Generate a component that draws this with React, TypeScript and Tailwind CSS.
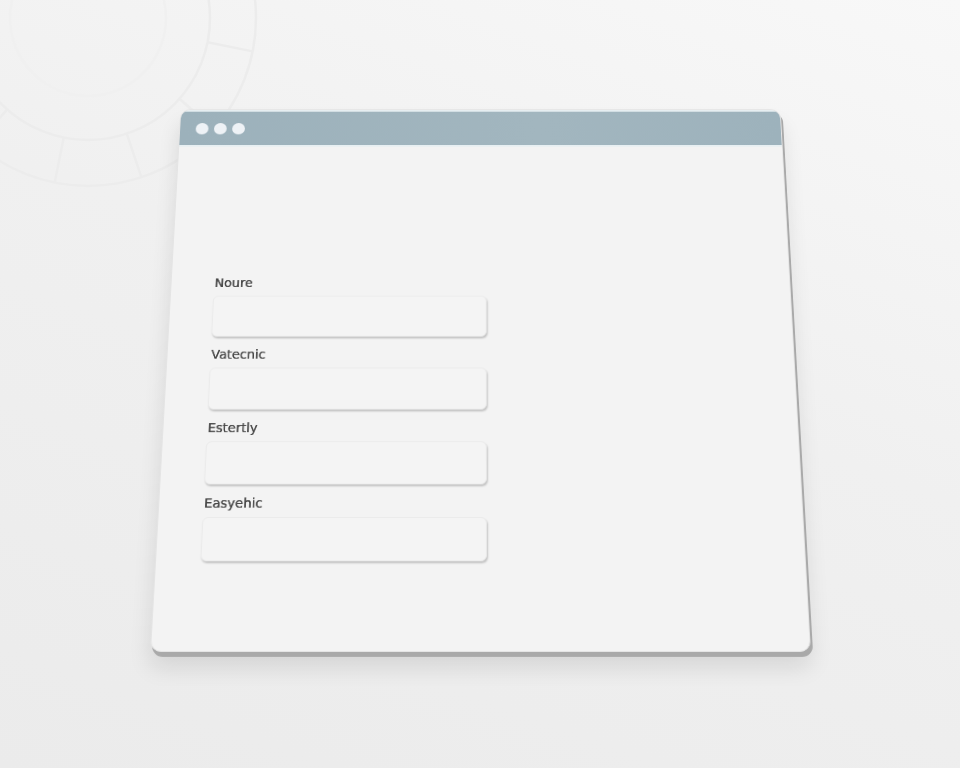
const fields = ["Noure", "Vatecnic", "Estertly", "Easyehic"];

function Dial() {
  // faint segmented dial in the top-left corner of the backdrop
  const spokes = Array.from({ length: 12 }, (_, i) => (i * Math.PI) / 6 + 0.2);
  return (
    <svg
      className="pointer-events-none absolute left-0 top-0"
      width="300"
      height="220"
      viewBox="0 0 300 220"
      fill="none"
    >
      <g stroke="#ececec" strokeWidth="2.5">
        <circle cx="88" cy="18" r="168" />
        <circle cx="88" cy="18" r="122" />
        <circle cx="88" cy="18" r="78" stroke="#f0f0f0" />
        {spokes.map((a, i) => (
          <line
            key={i}
            x1={88 + Math.cos(a) * 122}
            y1={18 + Math.sin(a) * 122}
            x2={88 + Math.cos(a) * 168}
            y2={18 + Math.sin(a) * 168}
          />
        ))}
      </g>
    </svg>
  );
}

function Field({ label }: { label: string }) {
  return (
    <div className="flex flex-col">
      <span className="pl-[1px] text-[13.5px] leading-4 text-[#444] mb-[7px] [text-shadow:0_0_0.4px_#444]">{label}</span>
      <div className="h-[47px] w-[291px] rounded-md border border-[#ebebeb] bg-[#f4f4f4] shadow-[1px_2px_2px_rgba(0,0,0,0.2)]" />
    </div>
  );
}

export default function App() {
  return (
    <div
      className="relative h-[768px] w-full overflow-hidden bg-[linear-gradient(200deg,#f8f8f8_0%,#f0f0f0_45%,#ebebeb_100%)]"
      style={{ fontFamily: '"DejaVu Sans", "Liberation Sans", sans-serif' }}
    >
      <Dial />
      <div className="pl-[150px] pt-[42px]">
        <div className="h-[610px] w-[661px] origin-bottom [transform:perspective(1200px)_rotateX(11.5deg)] rounded-[11px] border border-[#e4e4e4] bg-[#f3f3f3] shadow-[2px_5px_0_#a9a9a9,0_16px_22px_rgba(0,0,0,0.10)] overflow-hidden flex flex-col">
          <div className="h-[45px] flex items-center gap-[6px] pl-[17px] border-t-2 border-[#e6eef1] bg-[linear-gradient(90deg,#9cb1bb,#a2b6bf_60%,#9db2bc)] border-b-2 border-b-[#e7eff2]">
            <span className="h-[14px] w-[14px] rounded-full bg-[#eef2f6]" />
            <span className="h-[14px] w-[14px] rounded-full bg-[#eef2f6]" />
            <span className="h-[14px] w-[14px] rounded-full bg-[#eef2f6]" />
          </div>
          <div className="flex flex-col gap-3 pl-[45px] pt-[154px]">
            {fields.map((f) => (
              <Field key={f} label={f} />
            ))}
          </div>
        </div>
      </div>
    </div>
  );
}
